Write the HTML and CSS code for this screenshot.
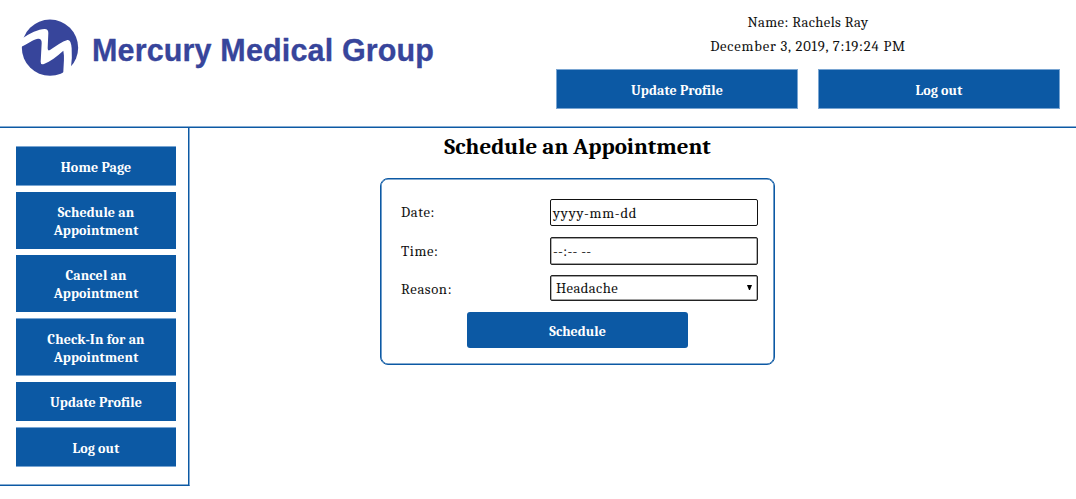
FILE: index.html
```html
<!DOCTYPE html>
<html lang="en">
<head>
<meta charset="utf-8">
<title>Mercury Medical Group</title>
<link rel="stylesheet" href="styles.css">
</head>
<body>
<header class="header">
  <svg class="logo" viewBox="0 0 450 90" role="img" aria-label="Mercury Medical Group">
    <g transform="scale(.33333)">
      <circle cx="150" cy="143" r="84.5" fill="#37459b"/>
      <path fill="#fff" d="M68 115 C88 99 116 88 134 87 Q145 87 145 99 L143 145 Q143 154 150 150 C168 138 187 124 202 120 Q213 118 215 145 Q217 172 213 202 L213 230 L189 230 L190 214 C191 190 194 170 190 152 C170 170 151 185 132 192 Q122 196 122 185 L125 130 Q126 115 114 116 C98 119 82 132 62 141 Z"/>
    </g>
    <text class="brand" x="92" y="61" textLength="342" lengthAdjust="spacing">Mercury Medical Group</text>
  </svg>
  <div class="account">
    <p class="line name">Name: Rachels Ray</p>
    <p class="line date">December 3, 2019, 7:19:24 PM</p>
    <div class="actions">
      <a class="btn">Update Profile</a>
      <a class="btn">Log out</a>
    </div>
  </div>
</header>
<div class="content">
  <nav class="sidebar">
    <a class="btn edged">Home Page</a>
    <a class="btn">Schedule an<br>Appointment</a>
    <a class="btn">Cancel an<br>Appointment</a>
    <a class="btn edged">Check-In for an<br>Appointment</a>
    <a class="btn">Update Profile</a>
    <a class="btn edged">Log out</a>
  </nav>
  <main class="main">
    <h1 class="title">Schedule an Appointment</h1>
    <form class="card">
      <div class="row"><span class="label">Date:</span><div class="field date-field">yyyy-mm-dd</div></div>
      <div class="row"><span class="label">Time:</span><div class="field gray time-field">--:-- --</div></div>
      <div class="row"><span class="label">Reason:</span><div class="field gray select">Headache
        <svg class="arrow" viewBox="0 0 5 5"><path d="M0 0H5L3 5H2Z"/></svg></div></div>
      <button class="submit" type="button">Schedule</button>
    </form>
  </main>
</div>
</body>
</html>
```
FILE: styles.css
```css
* { box-sizing: border-box; }
body {
  margin: 0;
  background: #fff;
  color: #111;
  font: 14.67px/18px Cambria, Caladea, "Noto Serif", "DejaVu Serif Condensed", "Liberation Serif", serif;
}
.header {
  display: flex;
  justify-content: space-between;
  height: 128px;
  padding-right: 16px;
  border-bottom: 1px solid #0c59a4;
  box-shadow: inset 0 -1px #86acd2;
}
.logo { width: 450px; height: 90px; }
.brand {
  font: bold 30.5px "Liberation Sans", Arial, sans-serif;
  fill: #37459b;
  stroke: #37459b;
  stroke-width: .3;
  stroke-linejoin: round;
}
.account { width: 504px; padding-top: 11px; text-align: center; }
.line { margin: 0; line-height: 24px; }
.name { letter-spacing: .4px; }
.date { letter-spacing: .79px; }
.actions { display: flex; gap: 20px; margin-top: 10px; }
.btn {
  display: block;
  background: #0c59a4;
  color: #fff;
  font-size: 14px;
  font-weight: bold;
  letter-spacing: .1px;
  text-align: center;
}
.actions .btn {
  flex: 1;
  height: 40px;
  padding-top: 12px;
  border: 1px solid #79a5d2;
}
.content { display: flex; }
.sidebar {
  display: flex;
  flex-direction: column;
  gap: 6px;
  width: 190px;
  height: 358px;
  padding: 18px 13px 0 16px;
  border-right: 1px solid #86acd2;
  border-bottom: 1px solid #0c59a4;
  box-shadow: inset -1px 0 #0c59a4, inset 0 -1px #86acd2;
}
.sidebar .btn { padding: 12px 0 9px; }
.sidebar .edged {
  padding: 12px 0 8px;
  border: solid #79a5d2;
  border-width: 1px 0;
}
.main {
  flex: 1;
  display: flex;
  flex-direction: column;
  align-items: center;
  padding-right: 111px;
}
.title { margin: 5px 0 17px; font-size: 23px; line-height: 28px; color: #000; }
.card {
  width: 395px;
  height: 187px;
  padding: 14px 15px 0 19px;
  border: 1px solid #0c59a4;
  border-radius: 8px;
  box-shadow: inset 0 0 0 .6px #0c59a4;
}
.row {
  display: flex;
  justify-content: space-between;
  align-items: center;
  height: 39px;
  padding-left: 1px;
  margin-right: 1px;
}
.row:nth-child(3) { height: 37px; }
.label { letter-spacing: .6px; }
.field {
  width: 208px;
  height: 27px;
  padding: 5px 2px;
  border: 1px solid #111;
  border-radius: 2px;
  letter-spacing: .3px;
}
.date-field { letter-spacing: .75px; }
.time-field { height: 28px; margin-bottom: 1px; }
.gray { border-color: #222; box-shadow: inset 0 0 0 .4px #444; }
.select {
  display: flex;
  justify-content: space-between;
  align-items: center;
  height: 26px;
  margin-bottom: 3px;
  padding: 2px 5px 0;
  letter-spacing: .4px;
}
.arrow { width: 5px; height: 5px; margin-top: -3px; }
.submit {
  display: block;
  width: 221px;
  height: 36px;
  margin: 4px 0 0 67px;
  padding: 2px 0 0;
  border: 0;
  border-radius: 3px;
  background: #0c59a4;
  color: #fff;
  font: bold 14px Cambria, Caladea, "Noto Serif", "DejaVu Serif Condensed", "Liberation Serif", serif;
}
```
